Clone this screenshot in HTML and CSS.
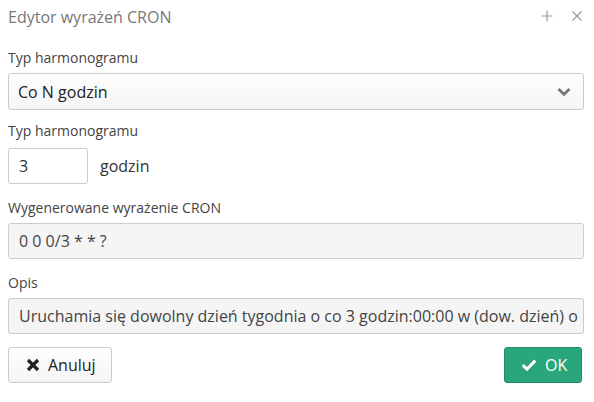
FILE: index.html
```html
<!DOCTYPE html>
<html>
<head>
<meta charset="utf-8">
<link rel="stylesheet" href="styles.css">
</head>
<body>
<div class="dialog">
  <div class="header">
    <div class="title">Edytor wyrażeń CRON</div>
    <div class="tools">
      <svg width="12" height="12" viewBox="0 0 12 12"><path d="M6 0.5 V11.5 M0.5 6 H11.5" stroke="#9a9a9a" stroke-width="1.2"/></svg>
      <svg width="12" height="12" viewBox="0 0 12 12"><path d="M1.5 1.5 L10.5 10.5 M10.5 1.5 L1.5 10.5" stroke="#9a9a9a" stroke-width="1.2"/></svg>
    </div>
  </div>
  <div class="field">
    <div class="label">Typ harmonogramu</div>
    <div class="select">
      <span>Co N godzin</span>
      <svg class="chev" width="14" height="10" viewBox="0 0 14 10"><path d="M1.5 2 L7 7.2 L12.5 2" fill="none" stroke="#777" stroke-width="2.8"/></svg>
    </div>
  </div>
  <div class="field f2">
    <div class="label">Typ harmonogramu</div>
    <div class="row">
      <div class="input small">3</div>
      <span class="unit">godzin</span>
    </div>
  </div>
  <div class="field f3">
    <div class="label">Wygenerowane wyrażenie CRON</div>
    <div class="input ro">0 0 0/3 * * ?</div>
  </div>
  <div class="field f3">
    <div class="label">Opis</div>
    <div class="input ro clip">Uruchamia się dowolny dzień tygodnia o co 3 godzin:00:00 w (dow. dzień) o</div>
  </div>
  <div class="footer">
    <button class="btn cancel"><svg width="14" height="14" viewBox="0 0 14 14"><path d="M2 2 L12 12 M12 2 L2 12" stroke="#222" stroke-width="3.2"/></svg>Anuluj</button>
    <button class="btn ok"><svg width="16" height="14" viewBox="0 0 16 14"><path d="M1.8 7.2 L6 11.2 L14.2 2.6" fill="none" stroke="#fff" stroke-width="3"/></svg>OK</button>
  </div>
</div>
</body>
</html>
```
FILE: styles.css
```css
* { box-sizing: border-box; }
body { margin: 0; background: #fff; font-family: "Open Sans", sans-serif; color: #333; }
.dialog { padding: 0 10px 0 8px; width: 594px; }
.header { display: flex; justify-content: space-between; align-items: center; height: 34px; }
.title { font-size: 16px; color: #777; }
.tools { display: flex; gap: 18px; align-items: center; margin-right: 1px; margin-top: -3px; }
.field { margin-top: 14px; }
.label { font-size: 14px; line-height: 20px; color: #444; margin-bottom: 5px; }
.select { height: 37px; border: 1px solid #ccc; border-radius: 3px; background: linear-gradient(#fdfdfd, #f5f5f5); display: flex; align-items: center; justify-content: space-between; padding: 0 12px 0 9px; font-size: 16px; color: #222; }
.f2 { margin-top: 11px; }
.f2 .label { margin-bottom: 7px; }
.f3 { margin-top: 14px; }
.row { display: flex; align-items: center; gap: 12px; }
.input { height: 36px; border: 1px solid #ccc; border-radius: 3px; display: flex; align-items: center; padding: 0 10px; font-size: 16px; color: #333; background: #fff; }
.small { width: 80px; }
.unit { font-size: 16px; color: #333; }
.ro { background: #f5f5f5; color: #444; }
.clip { white-space: nowrap; overflow: hidden; }
.footer { display: flex; justify-content: space-between; margin-top: 13px; padding-right: 2px; }
.btn { height: 36px; border-radius: 3px; font-family: "Open Sans", sans-serif; font-size: 16px; display: flex; align-items: center; gap: 8px; cursor: pointer; }
.cancel { width: 104px; border: 1px solid #ccc; background: linear-gradient(#fff, #f4f4f4); color: #222; padding: 0 0 0 17px; }
.ok { width: 78px; border: 1px solid #1f8c66; background: #29a67b; color: #fff; padding: 0 0 0 16px; }
```
